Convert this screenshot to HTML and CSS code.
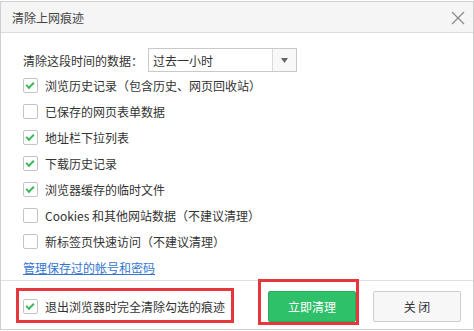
FILE: index.html
```html
<!DOCTYPE html>
<html lang="zh-CN">
  <head>
    <meta charset="UTF-8" />
    <meta name="viewport" content="width=device-width, initial-scale=1.0" />
    <title>清除上网痕迹</title>
    <link rel="stylesheet" href="styles.css">
  </head>
  <body>
    <div class="dialog">
      <div class="titlebar">
        <span class="title">清除上网痕迹</span>
        <svg class="close-x" width="14" height="14" viewBox="0 0 14 14">
          <path d="M1 1 L13 13 M13 1 L1 13" stroke="#8a8a8a" stroke-width="1.2" fill="none" />
        </svg>
      </div>

      <div class="content">
        <div class="range-row">
          <span class="range-label">清除这段时间的数据：</span>
          <div class="select">
            <span class="select-value">过去一小时</span>
            <span class="select-arrow">
              <svg width="7" height="5" viewBox="0 0 7 5"><path d="M0 0 H7 L3.5 5 Z" fill="#666" /></svg>
            </span>
          </div>
        </div>

        <label class="row"><span class="box checked"></span>浏览历史记录（包含历史、网页回收站）</label>
        <label class="row"><span class="box"></span>已保存的网页表单数据</label>
        <label class="row"><span class="box checked"></span>地址栏下拉列表</label>
        <label class="row"><span class="box checked"></span>下载历史记录</label>
        <label class="row"><span class="box checked"></span>浏览器缓存的临时文件</label>
        <label class="row"><span class="box"></span>Cookies 和其他网站数据（不建议清理）</label>
        <label class="row"><span class="box"></span>新标签页快速访问（不建议清理）</label>

        <div class="link-row"><a href="#">管理保存过的帐号和密码</a></div>
      </div>

      <div class="footer">
        <label class="row exit-row"><span class="box checked"></span>退出浏览器时完全清除勾选的痕迹</label>
        <button class="btn btn-primary">立即清理</button>
        <button class="btn btn-close">关&nbsp;闭</button>

        <!-- annotation boxes -->
        <div class="mark mark-left"></div>
        <div class="mark mark-right"></div>
      </div>
    </div>
  </body>
</html>
```

FILE: styles.css
```css
body {
  margin: 0;
  padding-top: 1px;
  background-color: #fff;
  font-family: "Noto Sans CJK SC", "Liberation Sans", sans-serif;
  font-size: 12px;
  color: #333;
  text-spacing-trim: space-all;
}
.dialog {
  width: 472px;
  height: 327px;
  border: 1px solid #cfcfcf;
  display: flex;
  flex-direction: column;
}
.titlebar {
  height: 30px;
  flex: none;
  background-color: #f5f5f5;
  border-bottom: 1px solid #dcdcdc;
  display: flex;
  align-items: center;
  justify-content: space-between;
  padding: 0 8px 0 11px;
}
.title {
  font-size: 12px;
  color: #444;
}
.close-x {
  margin-top: 1px;
}
.content {
  flex: none;
  padding: 15px 0 0 22px;
}
.range-row {
  display: flex;
  align-items: center;
  height: 24px;
}
.range-label {
  width: 125px;
}
.select {
  width: 147px;
  height: 22px;
  border: 1px solid #c9c9c9;
  display: flex;
  align-items: center;
}
.select-value {
  flex: 1;
  padding-left: 4px;
}
.select-arrow {
  width: 23px;
  height: 22px;
  border-left: 1px solid #dadada;
  background-color: #f8f8f8;
  display: flex;
  align-items: center;
  justify-content: center;
}
.row {
  display: flex;
  align-items: center;
  height: 26px;
}
.box {
  width: 13px;
  height: 13px;
  border: 1px solid #c4c4c4;
  border-radius: 2px;
  background-color: #fff;
  margin-right: 7px;
  position: relative;
  flex: none;
}
.box.checked::after {
  content: "";
  position: absolute;
  left: 3px;
  top: 1px;
  width: 6px;
  height: 3px;
  border-left: 2px solid #3cb55a;
  border-bottom: 2px solid #3cb55a;
  transform: translate(-1px, 2px) rotate(-45deg);
}
.link-row {
  height: 26px;
  display: flex;
  align-items: center;
}
.link-row a {
  color: #3476cf;
  text-decoration: underline;
}
.footer {
  flex: 1;
  border-top: 1px solid #e0e0e0;
  display: flex;
  align-items: center;
  padding: 3px 12px 0 22px;
  position: relative;
}
.exit-row {
  flex: 1;
}
.btn {
  width: 88px;
  height: 31px;
  border-radius: 2px;
  font-family: inherit;
  font-size: 12px;
  cursor: pointer;
}
.btn-primary {
  background-color: #2fc06a;
  border: 1px solid #27ad5e;
  color: #fff;
  margin-right: 17px;
}
.btn-close {
  background-color: #f7f7f7;
  border: 1px solid #cdcdcd;
  color: #333;
}
.mark {
  position: absolute;
  border: 3px solid #e5373c;
}
.mark-left {
  left: 15px;
  top: 7px;
  width: 212px;
  height: 29px;
}
.mark-right {
  left: 257px;
  top: -2px;
  width: 95px;
  height: 40px;
}
```
